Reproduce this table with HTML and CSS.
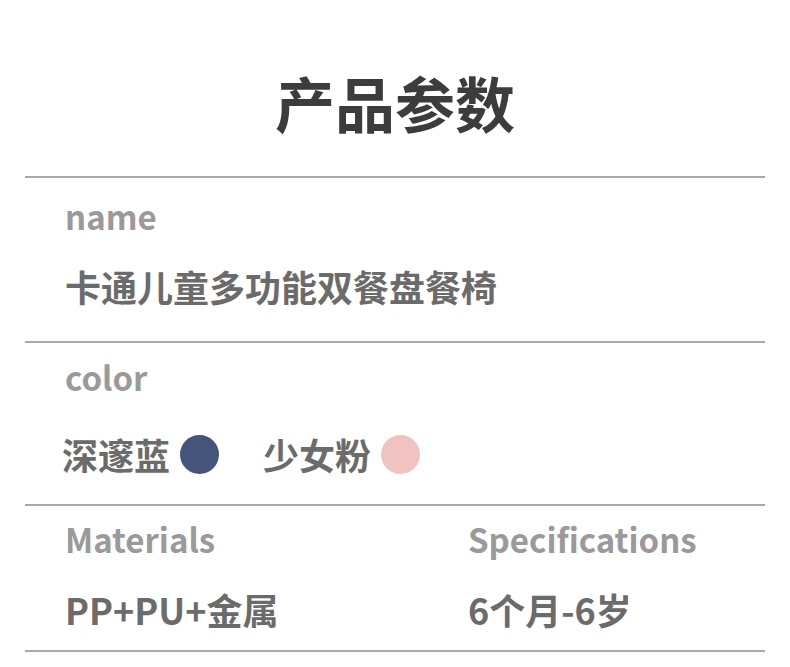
FILE: index.html
```html
<!DOCTYPE html>
<html lang="zh-CN">
<head>
<meta charset="utf-8">
<link rel="stylesheet" href="styles.css">
</head>
<body>
<div class="page">
  <h1 class="title">产品参数</h1>
  <section class="row row-name">
    <div class="label">name</div>
    <div class="value">卡通儿童多功能双餐盘餐椅</div>
  </section>
  <section class="row row-color">
    <div class="label">color</div>
    <div class="value colors">
      <span class="swatch">深邃蓝<i class="dot dot-blue"></i></span>
      <span class="swatch">少女粉<i class="dot dot-pink"></i></span>
    </div>
  </section>
  <section class="row row-spec split">
    <div class="col">
      <div class="label">Materials</div>
      <div class="value">PP+PU+金属</div>
    </div>
    <div class="col">
      <div class="label">Specifications</div>
      <div class="value">6个月-6岁</div>
    </div>
  </section>
</div>
</body>
</html>
```

FILE: styles.css
```css
html, body {
  margin: 0;
  padding: 0;
  background: #ffffff;
}
body {
  font-family: "Noto Sans CJK SC", "Noto Sans", sans-serif;
  font-weight: 700;
}
.page {
  width: 790px;
  height: 667px;
  overflow: hidden;
  padding: 0 25px;
  box-sizing: border-box;
}
.title {
  margin: 0;
  padding-top: 57px;
  height: 178px;
  box-sizing: border-box;
  text-align: center;
  font-size: 60px;
  line-height: 90px;
  color: #3c3c3c;
  border-bottom: 2px solid #a9a9a9;
}
.row {
  border-bottom: 2px solid #a9a9a9;
  padding-left: 40px;
}
.row-name { height: 163px; }
.row-color { height: 161px; }
.row-spec { height: 144px; }
.label {
  font-size: 33px;
  color: #9a9a9a;
  line-height: 40px;
  padding-top: 18px;
}
.row-color .label { padding-top: 14px; }
.row-spec .label { padding-top: 13px; }
.value {
  font-size: 36px;
  color: #6b6b6b;
  line-height: 50px;
  padding-top: 25px;
}
.row-color .value { padding-top: 32px; }
.colors {
  display: flex;
  gap: 44px;
  margin-left: -3px;
}
.swatch {
  display: flex;
  align-items: center;
  gap: 10px;
}
.dot {
  display: block;
  width: 39px;
  height: 39px;
  border-radius: 50%;
}
.dot-blue { background: #45547b; }
.dot-pink { background: #f0c3c0; }
.split {
  display: flex;
}
.col:first-child { width: 403px; }
```
